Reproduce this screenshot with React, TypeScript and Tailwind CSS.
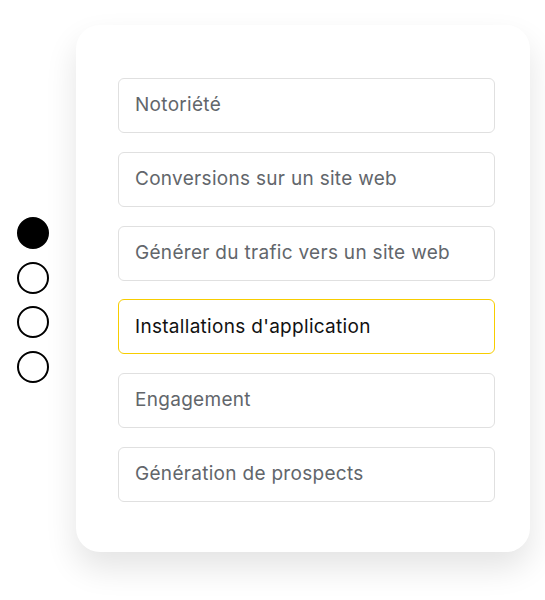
import React from 'react';

const options = [
  'Notoriété',
  'Conversions sur un site web',
  'Générer du trafic vers un site web',
  "Installations d'application",
  'Engagement',
  'Génération de prospects',
];

const SELECTED = 3;

export default function App() {
  return (
    <div
      className="w-[545px] h-[600px] bg-white flex items-start"
      style={{ fontFamily: 'Inter, "Noto Sans", sans-serif' }}
    >
      {/* Step dots */}
      <div className="flex flex-col gap-[12.5px] pl-[17px] pt-[217px] w-[76px]">
        {[0, 1, 2, 3].map((i) => (
          <div
            key={i}
            className={`w-[32px] h-[32px] rounded-full border-2 border-black ${
              i === 0 ? 'bg-black' : 'bg-white'
            }`}
          />
        ))}
      </div>

      {/* Card */}
      <div className="mt-[25px] w-[454px] h-[527px] bg-white rounded-[24px] shadow-[0_16px_32px_rgba(0,0,0,0.11)] pt-[53px] pl-[42px]">
        <div className="flex flex-col gap-[18.8px] w-[377px]">
          {options.map((label, i) => (
            <div
              key={label}
              className={`h-[55px] flex items-center px-[16px] rounded-[6px] text-[19px] tracking-[0.3px] ${
                i === SELECTED
                  ? 'border-[1.5px] border-[#f7cd00] text-[#111111]'
                  : 'border border-[#e0e0e0] text-[#62666b]'
              }`}
            >
              {label}
            </div>
          ))}
        </div>
      </div>
    </div>
  );
}
